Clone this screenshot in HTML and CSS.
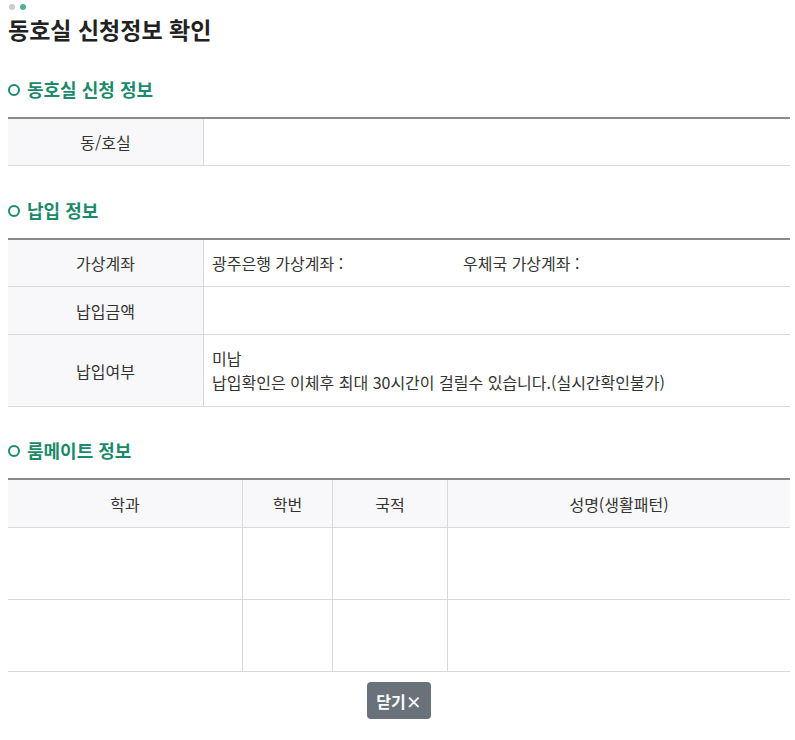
FILE: index.html
```html
<!DOCTYPE html>
<html lang="ko">
<head>
<meta charset="utf-8">
<title>동호실 신청정보 확인</title>
<link rel="stylesheet" href="styles.css">
</head>
<body>
<div id="container">
	<div class="dots"><span class="dot gray"></span><span class="dot teal"></span></div>
	<h1 class="title">동호실 신청정보 확인</h1>

	<h2 class="section first"><span class="ring"></span>동호실 신청 정보</h2>
	<table class="info">
		<tr>
			<th>동/호실</th>
			<td></td>
		</tr>
	</table>

	<h2 class="section"><span class="ring"></span>납입 정보</h2>
	<table class="info">
		<tr>
			<th>가상계좌</th>
			<td><span class="bank">광주은행 가상계좌 :</span><span>우체국 가상계좌 :</span></td>
		</tr>
		<tr class="mid">
			<th>납입금액</th>
			<td></td>
		</tr>
		<tr class="tall">
			<th>납입여부</th>
			<td>미납<br>납입확인은 이체후 최대 30시간이 걸릴수 있습니다.(실시간확인불가)</td>
		</tr>
	</table>

	<h2 class="section last"><span class="ring"></span>룸메이트 정보</h2>
	<table class="mates">
		<tr>
			<th class="c1">학과</th>
			<th class="c2">학번</th>
			<th class="c3">국적</th>
			<th>성명(생활패턴)</th>
		</tr>
		<tr>
			<td></td><td></td><td></td><td></td>
		</tr>
		<tr>
			<td></td><td></td><td></td><td></td>
		</tr>
	</table>

	<div class="buttons">
		<button class="close">닫기×</button>
	</div>
</div>
</body>
</html>
```

FILE: styles.css
```css
body {
	margin: 0;
	padding: 0 5px 0 8px;
	background: #fff;
	color: #333;
	font-family: "Noto Sans CJK KR", "Noto Sans", sans-serif;
	font-size: 16px;
}
.dots {
	display: flex;
	gap: 5px;
	padding: 4px 0 0 1px;
	height: 6px;
}
.dot {
	width: 6px;
	height: 6px;
	border-radius: 50%;
}
.dot.gray {
	background: #cacaca;
}
.dot.teal {
	background: #4bb292;
}
.title {
	margin: 4px 0 0;
	font-size: 23px;
	line-height: 30px;
	font-weight: bold;
	color: #222;
}
.section {
	display: flex;
	align-items: center;
	margin: 32px 0 16px;
	font-size: 18px;
	line-height: 24px;
	font-weight: bold;
	color: #1b8a6b;
}
.section.first {
	margin-top: 33px;
}
.section.last {
	margin-top: 31px;
}
.ring {
	width: 8px;
	height: 8px;
	border: 2.5px solid #1b8a6b;
	border-radius: 50%;
	margin: 1px 7px 0 0;
}
table {
	width: 100%;
	border-collapse: collapse;
	border-top: 2px solid #8a8a8a;
}
th, td {
	border-bottom: 1px solid #d9d9d9;
	font-weight: normal;
	line-height: 24px;
}
.info th {
	width: 195px;
	height: 46px;
	padding: 0;
	background: #f8f8fa;
	border-right: 1px solid #d9d9d9;
	text-align: center;
}
.info tr.mid th {
	height: 47px;
}
.info td {
	padding: 0 8px;
	text-align: left;
}
.info tr.tall td {
	padding: 11px 8px 12px;
}
.bank {
	display: inline-block;
	width: 251px;
}
.mates th {
	height: 47px;
	padding: 0;
	background: #f8f8fa;
	text-align: center;
}
.mates td {
	height: 71px;
	padding: 0;
}
.mates th + th, .mates td + td {
	border-left: 1px solid #d9d9d9;
}
.mates .c1 {
	width: 234px;
}
.mates .c2 {
	width: 89px;
}
.mates .c3 {
	width: 114px;
}
.buttons {
	display: flex;
	justify-content: center;
	margin-top: 10px;
}
.close {
	width: 64px;
	height: 37px;
	border: 0;
	border-radius: 4px;
	background: #69727b;
	color: #fff;
	font-family: "Noto Sans CJK KR", sans-serif;
	font-size: 16px;
	font-weight: bold;
}
```
